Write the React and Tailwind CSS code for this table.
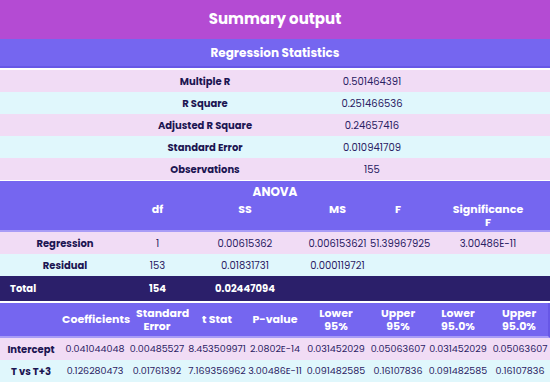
import React from "react";

const regStats = [
  ["Multiple R", "0.501464391"],
  ["R Square", "0.251466536"],
  ["Adjusted R Square", "0.24657416"],
  ["Standard Error", "0.010941709"],
  ["Observations", "155"],
];

const anovaRows = [
  ["Regression", "1", "0.00615362", "0.006153621", "51.39967925", "3.00486E-11"],
  ["Residual", "153", "0.01831731", "0.000119721", "", ""],
];

const coefHead = ["", "Coefficients", "Standard Error", "t Stat", "P-value", "Lower 95%", "Upper 95%", "Lower 95.0%", "Upper 95.0%"];

const coefRows = [
  ["Intercept", "0.041044048", "0.00485527", "8.453509971", "2.0802E-14", "0.031452029", "0.05063607", "0.031452029", "0.05063607"],
  ["T vs T+3", "0.126280473", "0.01761392", "7.169356962", "3.00486E-11", "0.091482585", "0.16107836", "0.091482585", "0.16107836"],
];

const rowBg = (i) => (i % 2 === 0 ? "bg-[#f1dcf5]" : "bg-[#e0f7fc]");
const anovaCols = "grid grid-cols-[130px_55px_120px_65px_56px_1fr]";
const coefCols = "grid grid-cols-[62px_66px_58px_62px_54px_68px_56px_64px_1fr]";

export default function App() {
  return (
    <div className="w-[550px] h-[382px] overflow-hidden bg-white font-['Poppins','Open_Sans',sans-serif] text-[10px] text-[#2a2163]">
      <div className="h-[39px] bg-[#b44bd3] flex items-center justify-center text-white text-[15px] font-bold">
        Summary output
      </div>
      <div className="h-[29px] bg-[#7566f0] border-b-2 border-[#6757e6] flex items-center justify-center text-white text-[12px] font-bold">
        Regression Statistics
      </div>
      <div className="pt-[2px]">
        {regStats.map(([label, value], i) => (
          <div key={label} className={`h-[22px] grid grid-cols-[80px_250px_84px_1fr] items-center ${rowBg(i)}`}>
            <span />
            <span className="text-center font-bold text-[#1c1552]">{label}</span>
            <span className="text-center">{value}</span>
            <span />
          </div>
        ))}
      </div>

      <div className="mt-px h-[51px] bg-[#7566f0] border-b-2 border-[#a89cf6] text-white font-bold text-[11px]">
        <div className="pt-[3px] text-center text-[12px] leading-[16px]">ANOVA</div>
        <div className={`${anovaCols} items-start text-center leading-[13px] pt-[3px]`}>
          <span />
          <span>df</span>
          <span>SS</span>
          <span>MS</span>
          <span>F</span>
          <span className="px-6">Significance F</span>
        </div>
      </div>
      {anovaRows.map((row, i) => (
        <div key={row[0]} className={`h-[22px] ${anovaCols} items-center text-center ${rowBg(i)}`}>
          {row.map((cell, j) => (
            <span key={j} className={j === 0 ? "font-bold text-[#1c1552]" : ""}>
              {cell}
            </span>
          ))}
        </div>
      ))}
      <div className={`h-[25px] ${anovaCols} items-center bg-[#2b1f6a] text-white font-bold`}>
        <span className="pl-[10px]">Total</span>
        <span className="text-center">154</span>
        <span className="text-center">0.02447094</span>
        <span />
        <span />
        <span />
      </div>

      <div className={`mt-[2px] h-[35px] ${coefCols} items-center bg-[#7566f0] border-b-2 border-[#a89cf6] border-r-2 border-r-[#6757e6] text-white font-bold text-[11px] text-center leading-[13px]`}>
        {coefHead.map((h, j) => (
          <span key={j} className={j === 1 || j === 3 || j === 4 ? "" : "px-2"}>
            {h}
          </span>
        ))}
      </div>
      {coefRows.map((row, i) => (
        <div key={row[0]} className={`h-[22px] ${coefCols} items-center text-center whitespace-nowrap text-[9.5px] ${rowBg(i)}`}>
          {row.map((cell, j) => (
            <span key={j} className={j === 0 ? "font-bold text-[10px] text-[#1c1552]" : ""}>
              {cell}
            </span>
          ))}
        </div>
      ))}
    </div>
  );
}
